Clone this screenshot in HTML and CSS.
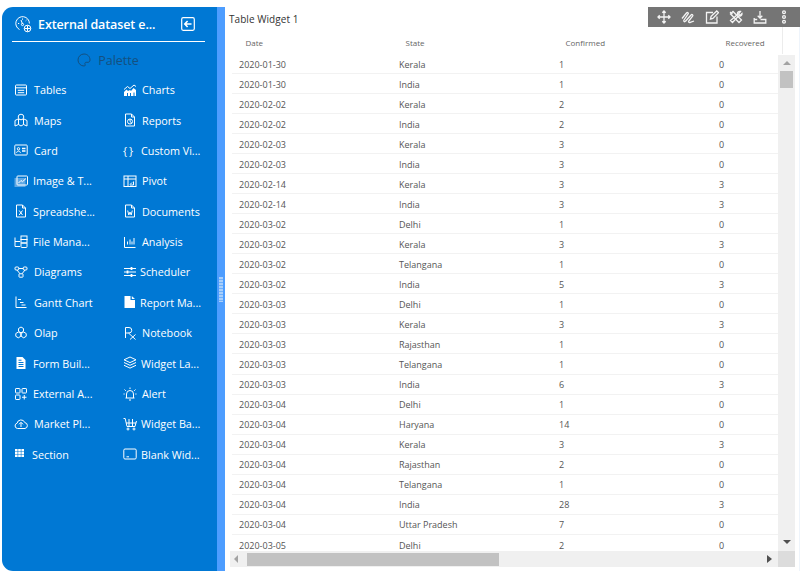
FILE: index.html
```html
<!DOCTYPE html>
<html lang="en">
<head>
<meta charset="utf-8">
<title>Table Widget</title>
<link rel="stylesheet" href="styles.css">
</head>
<body>
<div class="app">
  <aside class="sidebar">
    <header class="side-head">
      <svg class="head-icon" viewBox="0 0 17 17"><path d="M4.500 13.500A6.800 6.800 0 1 1 14.400 7.500M7.500 8 6 4M3 7.500h1.200M7.500 2.500v1.200M11.500 4l-.8.8"/><circle cx="7.500" cy="8.500" r="1.100"/><circle cx="12.500" cy="12.500" r="3.300"/><path d="M12.500 9.500v6M9.500 12.500h6"/></svg>
      <span class="head-title">External dataset e...</span>
      <svg class="back-icon" viewBox="0 0 14 14"><rect x=".7" y=".7" width="12.600" height="12.600" rx="1.500"/><path d="M10.500 7H4M6.600 4 3.800 7l2.800 3" stroke-width="1.600"/></svg>
    </header>
    <div class="palette">
      <svg class="pal-icon" viewBox="0 0 14 14"><path d="M7 1a6 6 0 1 0 0 12c1.400 0 1.400-1 1-1.800-.5-1 .2-1.900 1.200-1.900H11c1.300 0 2-1 2-2.300C13 3.400 10.300 1 7 1Z"/></svg>
      <span>Palette</span>
    </div>
    <nav class="grid">
      <a class="item"><svg viewBox="0 0 14 14"><rect x="1.500" y="2" width="11" height="10" rx=".8"/><path d="M1.500 4.800h11M3.800 7.300h6.400M3.800 9.700h6.400"/></svg><span>Tables</span></a>
      <a class="item"><svg viewBox="0 0 14 14"><path d="M1 6.500 4.500 3.500 7 5.500 11 2l2 1.500"/><path class="solid" d="M1 13V9l2.500-2.500L5 8l2-1 1 1 2.500-3L13 7v6h-1.500V9.500h-1V13H8V10H7v3H5v-3H4v3z"/></svg><span>Charts</span></a>
      <a class="item"><svg viewBox="0 0 14 14"><path d="M4 6 1 7.500V13l3.500-1.500L7 13l2.500-1.500L13 13V7.500L10 6"/><circle cx="7" cy="4" r="2.800"/><path d="M4.500 6v5.500M9.500 6v5.500"/></svg><span>Maps</span></a>
      <a class="item"><svg viewBox="0 0 14 14"><path d="M2.500 1h6l3 3v9h-9z"/><path d="M8.500 1v3h3"/><circle cx="7" cy="8.500" r="2.500"/><path d="M7 6v2.500l1.800 1.500"/></svg><span>Reports</span></a>
      <a class="item"><svg viewBox="0 0 14 14"><rect x=".8" y="2" width="12.400" height="10" rx=".8"/><circle cx="4.500" cy="5.800" r="1.200"/><path d="M2.600 9.800c.3-2.300 3.500-2.300 3.800 0"/><path class="thick" d="M8 5.500h3.500M8 8h3.500"/></svg><span>Card</span></a>
      <a class="item g4"><span class="braces">{ }</span><span>Custom Vi...</span></a>
      <a class="item g5"><svg viewBox="0 0 14 14"><path class="soft" d="M.5 4h11v9H.5z"/><rect x="3" y="2" width="10.500" height="9" rx=".8"/><path d="M4.500 9 7 6.500l1.500 1.200L12 4.500"/></svg><span>Image &amp; T...</span></a>
      <a class="item"><svg viewBox="0 0 14 14"><rect x="1" y="2" width="12" height="10.500"/><path d="M1 5h12M5 2v10.500M7 11h3.500V7.500M9 8.500 7 10.500"/></svg><span>Pivot</span></a>
      <a class="item g5"><svg viewBox="0 0 14 14"><path d="M2.500 1h6l3 3v9h-9z"/><path d="M8.500 1v3h3M5.200 6.500l3.300 4.500M8.500 6.500 5.200 11"/></svg><span>Spreadshe...</span></a>
      <a class="item"><svg viewBox="0 0 14 14"><path d="M2.500 1h6l3 3v9h-9z"/><path d="M8.500 1v3h3M4.700 6.500l1.100 4.500L7 8l1.200 3 1.100-4.500"/></svg><span>Documents</span></a>
      <a class="item g5"><svg viewBox="0 0 14 14"><path d="M1 2.500v9h5M1 6.500h5"/><rect x="7" y="1" width="6" height="3.500"/><rect x="7" y="4.500" width="6" height="3.500"/><rect x="7" y="8" width="6" height="4.500" rx=".8"/></svg><span>File Mana...</span></a>
      <a class="item"><svg viewBox="0 0 14 14"><path d="M1.500 2v10.500h11M4.500 9.500V6.500M7 9.500V4.500M9 9.500V6.500M11 9.500V3"/></svg><span>Analysis</span></a>
      <a class="item"><svg viewBox="0 0 14 14"><rect x="1" y="2" width="3.800" height="3" rx="1"/><rect x="9.200" y="2" width="3.800" height="3" rx="1"/><rect x="5" y="8.800" width="4" height="3.400" rx=".5"/><path d="M4.800 3.500h4.400M3 5l3 3.800M11 5 8 8.800"/></svg><span>Diagrams</span></a>
      <a class="item g3"><svg viewBox="0 0 14 14"><path d="M1 3.500h12M1 7h12M1 10.500h12"/><path d="M8.500 2v3M4.500 5.500v3M8.500 9v3" stroke-width="1.800"/></svg><span>Scheduler</span></a>
      <a class="item"><svg viewBox="0 0 14 14"><path d="M2 1.500V12.500h10.500M4 4.500h3M6 7.500h3.500M7.500 10h4"/></svg><span>Gantt Chart</span></a>
      <a class="item g3"><svg viewBox="0 0 14 14"><path class="solid" d="M1.500 1h6v4h4.500v8H1.500zM8.800 1l3.200 3H8.800z"/></svg><span>Report Ma...</span></a>
      <a class="item"><svg viewBox="0 0 14 14"><path d="M7 1 9.500 2.500v2.800L7 6.800 4.500 5.300V2.500zM4.300 6l2.500 1.500v2.800l-2.500 1.500-2.500-1.500V7.500zM9.700 6l2.500 1.500v2.800l-2.500 1.500-2.500-1.500V7.500z"/></svg><span>Olap</span></a>
      <a class="item"><svg viewBox="0 0 14 14"><path d="M2.500 12V1.500h3.500a2.700 2.700 0 0 1 0 5.500H2.500M5.500 7l7 6.500M12.500 8.500 7 13.500"/></svg><span>Notebook</span></a>
      <a class="item g5"><svg viewBox="0 0 14 14"><path class="solid" d="M2.500 1h6l3 3v9h-9z"/><path class="cut" d="M4.500 4.200h3M4.500 6.500h5M4.500 8.500h5M4.500 10.500h5"/></svg><span>Form Buil...</span></a>
      <a class="item g4"><svg viewBox="0 0 14 14"><path d="M7 1l6 2.800L7 6.600 1 3.800zM1 6.500l6 2.800 6-2.800M1 9.300l6 2.800 6-2.800"/></svg><span>Widget La...</span></a>
      <a class="item g5"><svg viewBox="0 0 14 14"><rect x="1.500" y="1.500" width="4.500" height="4.500" rx=".6"/><rect x="8" y="1.500" width="4.500" height="4.500" rx=".6"/><rect x="1.500" y="8" width="4.500" height="4.500" rx=".6"/><path d="M10.250 8v4.500M8 10.250h4.500"/></svg><span>External A...</span></a>
      <a class="item"><svg viewBox="0 0 14 14"><path d="M3.500 11V7a3.500 3.500 0 0 1 7 0v4M2.500 11h9M6 13h2M7 .5v1.500M1.500 2.500l1.300 1.300M12.500 2.500l-1.300 1.300M.5 7h1.200M12.300 7h1.200"/></svg><span>Alert</span></a>
      <a class="item"><svg viewBox="0 0 14 14"><path d="M3.500 11.500a2.700 2.700 0 0 1-.4-5.300 4 4 0 0 1 7.700-.6 3 3 0 0 1 .2 5.900zM7 10V5.500M5 7.300 7 5.300l2 2"/></svg><span>Market Pl...</span></a>
      <a class="item g4"><svg viewBox="0 0 14 14"><path d="M.5 1.500h1.700L4 9.500h8l1.500-5.500M3 6h10M6 2v7.500M9.500 2v7.500"/><circle cx="5" cy="12" r="1"/><circle cx="11" cy="12" r="1"/></svg><span>Widget Ba...</span></a>
      <a class="item section"><svg class="section-icon" viewBox="0 0 9 8"><path class="solid" d="M0 0h2.600v2.300H0zM3.200 0h2.600v2.300H3.200zM6.400 0H9v2.300H6.400zM0 2.850h2.600v2.300H0zM3.200 2.850h2.600v2.300H3.200zM6.400 2.850H9v2.300H6.400zM0 5.700h2.600V8H0zM3.200 5.700h2.600V8H3.200zM6.400 5.700H9V8H6.400z"/></svg><span>Section</span></a>
      <a class="item g4"><svg viewBox="0 0 14 14"><rect x=".8" y="2" width="12.400" height="10" rx="1.200"/><path d="M3.500 9.800h2.500"/></svg><span>Blank Wid...</span></a>
    </nav>
  </aside>
  <div class="splitter"><i class="grip"></i></div>
  <main class="content">
    <div class="title-bar">
      <h1 class="title">Table Widget 1</h1>
      <div class="toolbar">
        <svg viewBox="0 0 14 14"><path d="M7 1v12M1 7h12M5.300 2.700 7 1l1.700 1.700M5.300 11.300 7 13l1.700-1.700M2.700 5.300 1 7l1.700 1.700M11.300 5.300 13 7l-1.700 1.700"/></svg>
        <svg viewBox="0 0 14 14"><path d="M1 8.500 5.500 3c1-1.200 2.500 0 1.500 1.200L3 10c-.8 1.200.6 2.300 1.500 1.200L10 5c1-1.200 2.500 0 1.600 1.200L7.800 11c-.8 1 .4 2 1.500 1.400L13 11"/></svg>
        <svg viewBox="0 0 14 14"><path d="M8 2.500H1.500V13H12V6.500M5.500 9l.6-2.600L11.800 1l1.700 1.700L7.900 8.400z"/></svg>
        <svg viewBox="0 0 14 14"><path d="M1.500 4 4 1.500l8.500 8.500-2.500 2.500zM1 2l2.500 2"/><path d="M13 3.500 11 5.500 9.500 4l2-2.500C9.500 1 8 2.500 8.500 4.500L1.500 10.500 3.500 12.500 9.500 6c1.800.5 3.800-.7 3.500-2.500z"/></svg>
        <svg viewBox="0 0 14 14"><path d="M7 1v7M4.700 5.700 7 8l2.300-2.300M1.200 8v5h11.600V9.500H7.500M1.200 9.500h3"/></svg>
        <svg viewBox="0 0 14 14"><circle cx="7" cy="2.200" r="1.400"/><circle cx="7" cy="7" r="1.400"/><circle cx="7" cy="11.800" r="1.400"/></svg>
      </div>
    </div>
    <div class="table-wrap">
      <div class="table-col">
        <table class="data">
          <thead>
            <tr><th>Date</th><th>State</th><th>Confirmed</th><th>Recovered</th></tr>
          </thead>
          <tbody>
            <tr><td>2020-01-30</td><td>Kerala</td><td>1</td><td>0</td></tr>
            <tr><td>2020-01-30</td><td>India</td><td>1</td><td>0</td></tr>
            <tr><td>2020-02-02</td><td>Kerala</td><td>2</td><td>0</td></tr>
            <tr><td>2020-02-02</td><td>India</td><td>2</td><td>0</td></tr>
            <tr><td>2020-02-03</td><td>Kerala</td><td>3</td><td>0</td></tr>
            <tr><td>2020-02-03</td><td>India</td><td>3</td><td>0</td></tr>
            <tr><td>2020-02-14</td><td>Kerala</td><td>3</td><td>3</td></tr>
            <tr><td>2020-02-14</td><td>India</td><td>3</td><td>3</td></tr>
            <tr><td>2020-03-02</td><td>Delhi</td><td>1</td><td>0</td></tr>
            <tr><td>2020-03-02</td><td>Kerala</td><td>3</td><td>3</td></tr>
            <tr><td>2020-03-02</td><td>Telangana</td><td>1</td><td>0</td></tr>
            <tr><td>2020-03-02</td><td>India</td><td>5</td><td>3</td></tr>
            <tr><td>2020-03-03</td><td>Delhi</td><td>1</td><td>0</td></tr>
            <tr><td>2020-03-03</td><td>Kerala</td><td>3</td><td>3</td></tr>
            <tr><td>2020-03-03</td><td>Rajasthan</td><td>1</td><td>0</td></tr>
            <tr><td>2020-03-03</td><td>Telangana</td><td>1</td><td>0</td></tr>
            <tr><td>2020-03-03</td><td>India</td><td>6</td><td>3</td></tr>
            <tr><td>2020-03-04</td><td>Delhi</td><td>1</td><td>0</td></tr>
            <tr><td>2020-03-04</td><td>Haryana</td><td>14</td><td>0</td></tr>
            <tr><td>2020-03-04</td><td>Kerala</td><td>3</td><td>3</td></tr>
            <tr><td>2020-03-04</td><td>Rajasthan</td><td>2</td><td>0</td></tr>
            <tr><td>2020-03-04</td><td>Telangana</td><td>1</td><td>0</td></tr>
            <tr><td>2020-03-04</td><td>India</td><td>28</td><td>3</td></tr>
            <tr><td>2020-03-04</td><td>Uttar Pradesh</td><td>7</td><td>0</td></tr>
            <tr><td>2020-03-05</td><td>Delhi</td><td>2</td><td>0</td></tr>
          </tbody>
        </table>
        <div class="hbar">
          <i class="arrow-left"></i>
          <i class="hthumb"></i>
          <i class="arrow-right"></i>
        </div>
      </div>
      <div class="vbar">
        <i class="arrow-up"></i>
        <i class="vthumb"></i>
        <i class="arrow-down"></i>
        <i class="corner"></i>
      </div>
    </div>
  </main>
</div>
</body>
</html>
```
FILE: styles.css
```css
* { box-sizing: border-box; }
html, body { margin: 0; height: 100%; background: #fff; overflow: hidden; }
body { font-family: "Open Sans", "Noto Sans", sans-serif; }
.app { display: flex; height: 574px; padding: 7px 3px 3px 2px; }

.sidebar { width: 215px; flex: none; background: #0078d4; border-radius: 11px 0 0 11px; color: #fff; padding: 0 12px; }
.side-head { height: 35px; width: 193px; margin-left: -2px; display: flex; align-items: center; border-bottom: 1px solid #fff; padding: 0 10px 0 3px; }
.head-icon { width: 17px; height: 17px; flex: none; fill: none; stroke: #fff; stroke-width: 1; }
.head-title { font-weight: 600; font-size: 12.5px; margin-left: 6px; white-space: nowrap; letter-spacing: -.1px; }
.back-icon { width: 14px; height: 14px; flex: none; margin-left: auto; fill: none; stroke: #fff; stroke-width: 1.2; }
.palette { height: 36px; display: flex; align-items: center; justify-content: center; gap: 7px; font-size: 12.5px; color: #14507f; padding-right: 3px; }
.pal-icon { width: 14px; height: 14px; fill: none; stroke: #14507f; stroke-width: 1; }

.grid { display: grid; grid-template-columns: 109px 81px; grid-auto-rows: 30.4px; margin-top: -.4px; }
.item { display: flex; align-items: center; gap: 6px; font-size: 10.8px; min-width: 0; height: 24px; white-space: nowrap; }
.item:nth-child(even) { gap: 5px; }
.item.g5 { gap: 5px; }
.item.g4 { gap: 4px; }
.item.g3 { gap: 3px; }
.item.section { gap: 8px; padding-left: 1px; }
.item svg { width: 14px; height: 14px; flex: none; fill: none; stroke: #fff; stroke-width: 1; }
.item svg.section-icon { width: 9px; height: 8px; margin-top: -2px; }
.item svg .solid { fill: #fff; stroke: none; }
.item svg .soft { fill: #5fa8e4; stroke: none; }
.item svg .cut { stroke: #0078d4; }
.item svg .thick { stroke-width: 1.6; }
.item .braces { flex: none; width: 14px; font-size: 11px; letter-spacing: -.5px; }

.splitter { width: 8px; flex: none; background: #4d9dff; display: flex; align-items: center; justify-content: center; }
.grip { width: 4px; height: 25px; display: block; background: repeating-linear-gradient(#a9cffb 0 2px, #6fb0fa 2px 3px); }

.content { flex: 1; min-width: 0; display: flex; flex-direction: column; }
.title-bar { height: 20px; display: flex; justify-content: space-between; }
.title { margin: 2px 0 0 4px; font-size: 10px; font-weight: 400; color: #333; line-height: 20px; letter-spacing: .05px; }
.toolbar { width: 152px; height: 20px; background: #757575; display: flex; align-items: center; justify-content: space-between; padding: 0 9px; }
.toolbar svg { width: 14px; height: 14px; fill: none; stroke: #f4f4f4; stroke-width: 1.3; }

.table-wrap { flex: 1; display: flex; align-items: flex-start; padding-left: 5px; min-height: 0; border-right: 1px solid #eef4fb; }
.table-col { width: 548px; flex: none; }
.data { display: block; width: 548px; font-size: 9px; color: #555; border-collapse: collapse; }
.data thead { display: block; }
.data thead tr { display: grid; grid-template-columns: 160px 160px 160px 71px; margin-left: 2px; height: 27px; }
.data th { font-weight: 400; font-size: 8px; text-align: left; padding: 10px 0 0 13.5px; color: #666; line-height: 11px; }
.data th:last-child { border-right: 1px solid #ececec; }
.data tbody { display: block; height: 497px; overflow: hidden; }
.data tbody tr { display: grid; grid-template-columns: 160px 160px 160px 66px; margin-left: 2px; height: 20.04px; border-bottom: 1px solid #f2f2f2; }
.data td { padding: 1.5px 0 0 7px; display: flex; align-items: center; }

.hbar { height: 16px; width: 548px; background: #f0f0f0; display: flex; align-items: center; padding-left: 4px; }
.hthumb { width: 252px; height: 13px; background: #c2c2c2; margin-left: 9px; }
.arrow-left { border: 4px solid transparent; border-right: 4px solid #a3a3a3; border-left: 0; }
.arrow-right { border: 4px solid transparent; border-left: 5px solid #505050; border-right: 0; margin-left: auto; margin-right: 6px; }
.vbar { width: 17px; height: 512px; background: #f0f0f0; margin-top: 28px; display: flex; flex-direction: column; align-items: center; }
.arrow-up { border: 4px solid transparent; border-bottom: 4px solid #a3a3a3; border-top: 0; margin-top: 6px; }
.vthumb { width: 13px; height: 17px; background: #c2c2c2; margin-top: 6px; }
.arrow-down { border: 4px solid transparent; border-top: 4px solid #505050; border-bottom: 0; margin-top: auto; margin-bottom: 7px; }
.corner { width: 100%; height: 16px; background: #dcdcdc; flex: none; }
```
